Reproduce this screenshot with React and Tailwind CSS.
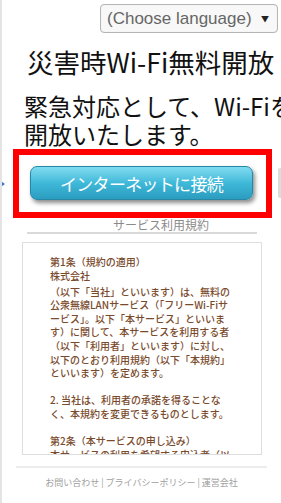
import React from 'react'

const jp = { fontFamily: '"Noto Sans CJK JP", "Noto Sans", sans-serif' }

const terms = [
  '第1条（規約の適用）',
  '株式会社',
  '（以下「当社」といいます）は、無料の',
  '公衆無線LANサービス（「フリーWi-Fiサ',
  'ービス」。以下「本サービス」といいま',
  'す）に関して、本サービスを利用する者',
  '（以下「利用者」といいます）に対し、',
  '以下のとおり利用規約（以下「本規約」',
  'といいます）を定めます。',
  '',
  '2. 当社は、利用者の承諾を得ることな',
  'く、本規約を変更できるものとします。',
  '',
  '第2条（本サービスの申し込み）',
  '本サービスの利用を希望する申込者（以',
]

function App() {
  return (
    <div className='relative w-[281px] h-[503px] overflow-hidden bg-white border-l-2 border-[#e4e4e4]' style={jp}>
      {/* language picker */}
      <div className='flex justify-end pt-[4px] pr-[3px]'>
        <div className='flex items-center justify-between w-[178px] h-[29px] pl-[6px] pr-[8px] rounded-[4px] border border-[#b5b5b5] bg-[#f8f8f8] shadow-[inset_0_0_1px_rgba(0,0,0,0.15)]'>
          <span className='text-[17px] text-[#666] font-["Liberation_Sans",Arial,sans-serif] whitespace-nowrap'>(Choose language)</span>
          <span className='text-[8px] text-[#222]'>▼</span>
        </div>
      </div>

      <div className='mt-[13px] pl-[25px] text-[26.5px] leading-[32px] text-[#111] whitespace-nowrap'>災害時Wi-Fi無料開放</div>

      <div className='mt-[14px] pl-[22px] text-[24px] leading-[28px] text-[#111] whitespace-nowrap'>
        <div>緊急対応として、Wi-Fiを</div>
        <div>開放いたします。</div>
      </div>

      {/* connect button */}
      <div className='mt-[1px] ml-[11px] w-[259px] h-[69px] border-[6px] border-[#ff0000] pt-[11px] pl-[11px]'>
        <button className='w-[223px] h-[34px] rounded-[7px] border border-[#2687a6] bg-linear-to-b from-[#7fdcf0] via-[#3fb9d9] to-[#2b9cbf] shadow-[2px_3px_4px_rgba(0,0,0,0.45)] text-white text-[17px] tracking-[-0.7px] leading-none'>
          インターネットに接続
        </button>
      </div>

      <div className='pl-[111px] text-[12px] leading-[14px] text-[#8a8a8a]'>サービス利用規約</div>
      <div className='ml-[25px] w-[230px] h-[2px] bg-[#d9d9d9]'></div>

      {/* terms */}
      <div className='mt-[8px] ml-[20px] w-[240px] h-[213px] border border-[#dedede] overflow-hidden pt-[12px] pl-[27px] text-[10px] leading-[13.6px] font-medium text-[#7a4a2c]'>
        {terms.map((line, i) => (
          <div key={i} className={`whitespace-nowrap ${i === 1 ? 'h-[16px]' : 'h-[13.6px]'}`}>{line}</div>
        ))}
      </div>

      <div className='mt-[11px] ml-[14px] w-[251px] h-[2px] bg-[#ececec]'></div>
      <div className='mt-[8px] text-center text-[9px] leading-[14px] text-[#a0a0a0] whitespace-nowrap'>
        お問い合わせ | プライバシーポリシー | 運営会社
      </div>

      {/* partial slider arrows */}
      <div className='absolute left-[-1px] top-[181px] w-0 h-0 border-y-[3px] border-y-transparent border-l-[4px] border-l-[#3a7fd0]'></div>
      <div className='absolute right-0 top-[168px] w-[3px] h-[30px] rounded-l-[2px] bg-[#dcdcdc]'></div>
    </div>
  )
}

export default App
